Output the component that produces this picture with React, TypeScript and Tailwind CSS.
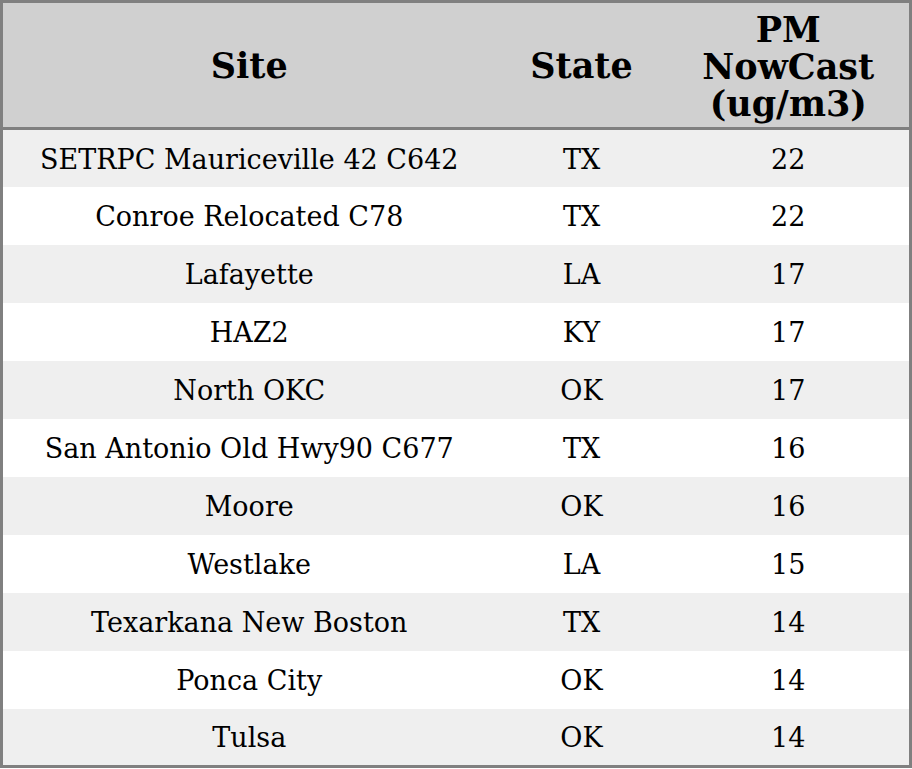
const rows: [string, string, number][] = [
  ['SETRPC Mauriceville 42 C642', 'TX', 22],
  ['Conroe Relocated C78', 'TX', 22],
  ['Lafayette', 'LA', 17],
  ['HAZ2', 'KY', 17],
  ['North OKC', 'OK', 17],
  ['San Antonio Old Hwy90 C677', 'TX', 16],
  ['Moore', 'OK', 16],
  ['Westlake', 'LA', 15],
  ['Texarkana New Boston', 'TX', 14],
  ['Ponca City', 'OK', 14],
  ['Tulsa', 'OK', 14],
];

export default function App() {
  return (
    <div className="w-[912px] h-[769px] bg-white font-['DejaVu_Serif',serif] text-black">
      <table className="w-full border-collapse border-[3px] border-[#808080] table-fixed">
        <colgroup>
          <col className="w-[494px]" />
          <col className="w-[172px]" />
          <col />
        </colgroup>
        <thead>
          <tr className="bg-[#d0d0d0] h-[127px] border-b-[3px] border-[#808080]">
            <th className="text-[35px] leading-[37px] font-bold text-center">Site</th>
            <th className="text-[35px] leading-[37px] font-bold text-center">State</th>
            <th className="text-[35px] leading-[37px] font-bold text-center pt-[2px]">
              PM
              <br />
              NowCast
              <br />
              (ug/m3)
            </th>
          </tr>
        </thead>
        <tbody>
          {rows.map(([site, state, pm], i) => (
            <tr key={site} className={i % 2 === 0 ? 'bg-[#efefef] h-[58px]' : 'bg-white h-[58px]'}>
              <td className="text-[27px] text-center pt-[3px]">{site}</td>
              <td className="text-[27px] text-center pt-[3px]">{state}</td>
              <td className="text-[27px] text-center pt-[3px]">{pm}</td>
            </tr>
          ))}
        </tbody>
      </table>
    </div>
  );
}
